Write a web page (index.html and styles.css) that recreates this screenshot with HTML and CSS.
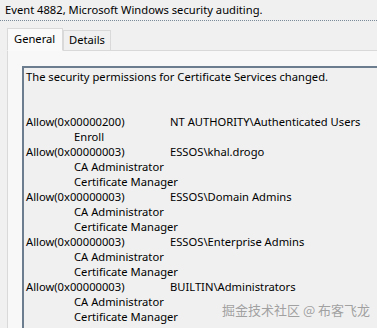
FILE: index.html
```html
<!DOCTYPE html>
<html>
<head>
<meta charset="utf-8">
<link rel="stylesheet" href="styles.css">
</head>
<body>
<div class="title">Event 4882, Microsoft Windows security auditing.</div>
<div class="tabs">
  <div class="tab active">General</div>
  <div class="tab">Details</div>
</div>
<div class="panel">
  <div class="box">
    <div class="line">The security permissions for Certificate Services changed.</div>
    <div class="line blank"></div>
    <div class="line blank"></div>
    <div class="line row"><span class="perm">Allow(0x00000200)</span><span>NT AUTHORITY\Authenticated Users</span></div>
    <div class="line sub">Enroll</div>
    <div class="line row"><span class="perm">Allow(0x00000003)</span><span>ESSOS\khal.drogo</span></div>
    <div class="line sub">CA Administrator</div>
    <div class="line sub">Certificate Manager</div>
    <div class="line row"><span class="perm">Allow(0x00000003)</span><span>ESSOS\Domain Admins</span></div>
    <div class="line sub">CA Administrator</div>
    <div class="line sub">Certificate Manager</div>
    <div class="line row"><span class="perm">Allow(0x00000003)</span><span>ESSOS\Enterprise Admins</span></div>
    <div class="line sub">CA Administrator</div>
    <div class="line sub">Certificate Manager</div>
    <div class="line row"><span class="perm">Allow(0x00000003)</span><span>BUILTIN\Administrators</span></div>
    <div class="line sub">CA Administrator</div>
    <div class="line sub">Certificate Manager</div>
  </div>
</div>
<div class="watermark">掘金技术社区 @ 布客飞龙</div>
</body>
</html>
```
FILE: styles.css
```css
html, body {
  margin: 0;
  padding: 0;
  width: 377px;
  height: 328px;
  overflow: hidden;
  background: #f0f0f0;
  font-family: "Noto Sans", "Open Sans", sans-serif;
  font-size: 11.2px;
  color: #000;
}
body {
  position: relative;
}
.title {
  height: 20px;
  line-height: 20px;
  padding-left: 5px;
  white-space: nowrap;
  border-bottom: 1px dotted #7a8a99;
}
.tabs {
  display: flex;
  align-items: flex-end;
  margin-top: 6px;
  margin-left: 7px;
  height: 23px;
  position: relative;
  z-index: 1;
}
.tab {
  box-sizing: border-box;
  height: 20px;
  line-height: 18px;
  padding: 0 5px;
  border: 1px solid #d9d9d9;
  border-bottom: none;
  background: #f0f0f0;
}
.tab.active {
  height: 23px;
  line-height: 20px;
  width: 56px;
  padding: 0 6px;
  background: #fafafa;
  border-bottom: 1px solid #fafafa;
  margin-bottom: -1px;
}
.panel {
  margin-left: 7px;
  width: 420px;
  border: 1px solid #d9d9d9;
  border-right: none;
  background: #f8f8f8;
  padding: 15px 0 0 14px;
  height: 300px;
}
.box {
  border-top: 2px solid #6c7d8f;
  border-left: 2px solid #6c7d8f;
  background: #f0f0f0;
  padding: 1px 0 0 2px;
  height: 300px;
  white-space: nowrap;
}
.line {
  height: 15px;
  line-height: 15px;
}
.row {
  display: flex;
}
.perm {
  width: 144px;
  flex: none;
}
.sub {
  padding-left: 48px;
}
.watermark {
  position: absolute;
  left: 222px;
  top: 301px;
  white-space: nowrap;
  font-family: "Noto Sans CJK SC", sans-serif;
  font-size: 13px;
  line-height: 18px;
  color: rgba(140, 140, 140, 0.8);
}
```
